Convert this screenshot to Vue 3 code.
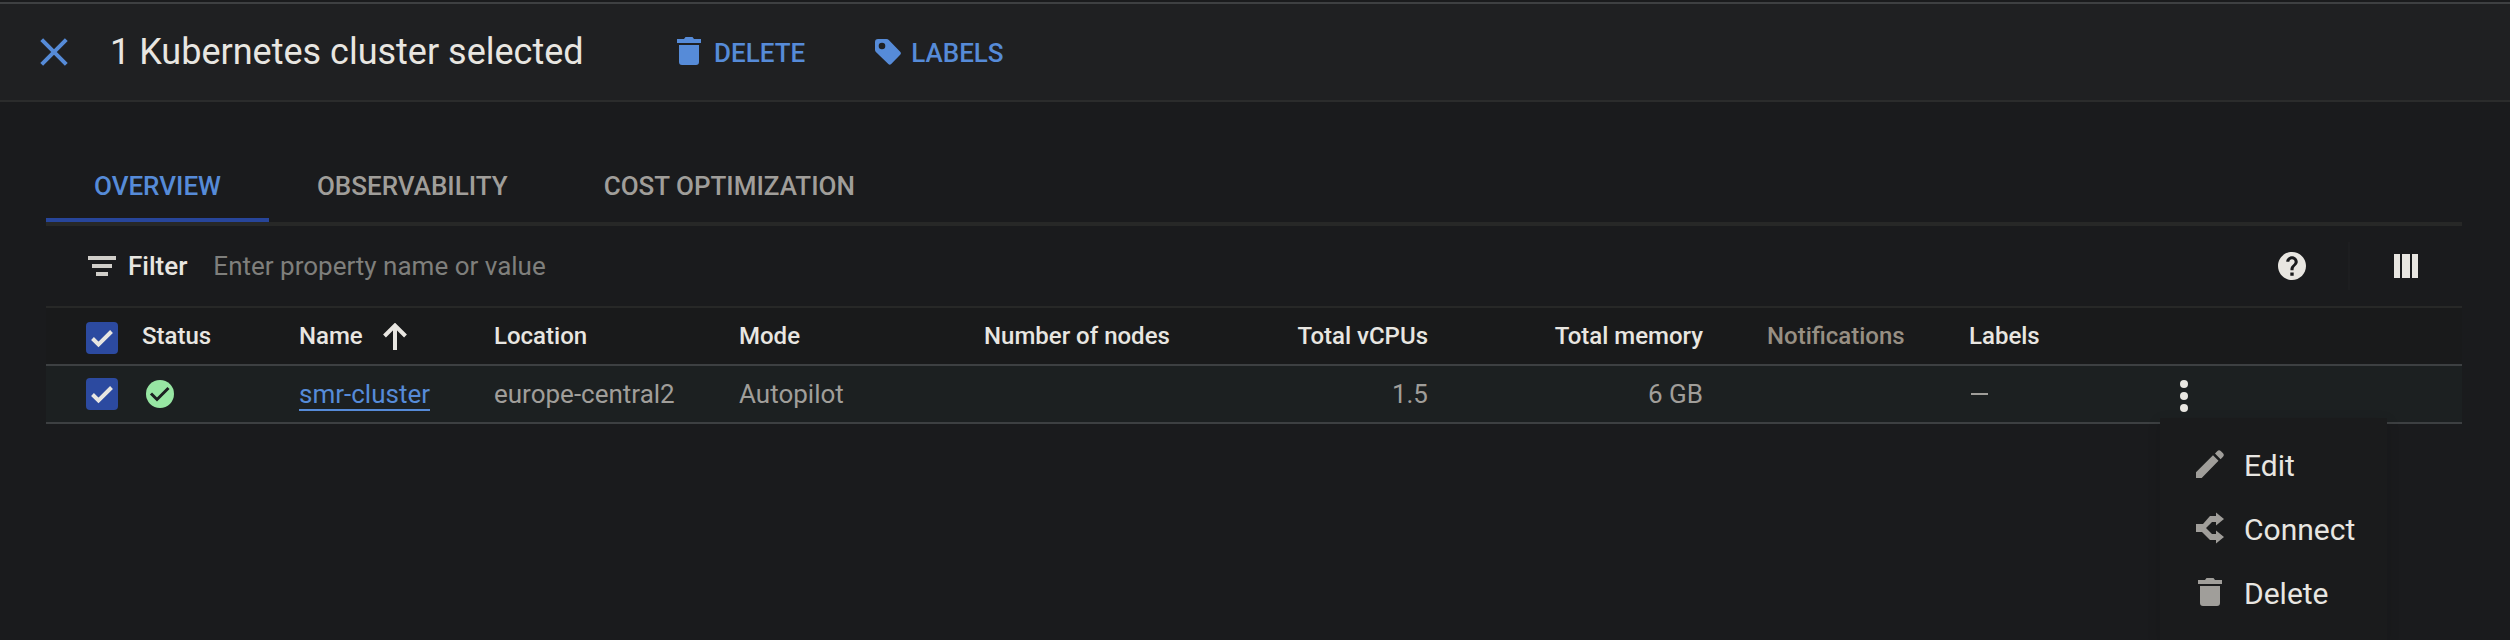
<script setup>
const tabs = ['OVERVIEW', 'OBSERVABILITY', 'COST OPTIMIZATION']
</script>

<template>
  <div class="page">
    <header class="bar">
      <svg class="close" viewBox="0 0 28 28"><path d="M1.7 1.7 26.3 26.3M26.3 1.7 1.7 26.3" /></svg>
      <h1 class="title">1 Kubernetes cluster selected</h1>
      <button class="action">
        <svg class="trash" viewBox="0 0 24 28"><path d="M0 2H7L8.5 0H15.5L17 2H24V6H0ZM2 8H22V25Q22 28 19 28H5Q2 28 2 25Z" /></svg>
        <span>DELETE</span>
      </button>
      <button class="action labels">
        <svg class="tag" viewBox="0 0 26 26"><path fill-rule="evenodd" d="M3 0H11.5Q12.9 0 13.8.9L25.2 12.8Q26.6 14.3 25.2 15.8L16.2 25.1Q14.8 26.5 13.3 25.1L.9 12.9Q0 12 0 10.8V3Q0 0 3 0ZM7 3.7A3.3 3.3 0 1 0 7 10.3A3.3 3.3 0 1 0 7 3.7Z" /></svg>
        <span>LABELS</span>
      </button>
    </header>

    <main class="content">
      <nav class="tabs">
        <a v-for="(tab, i) in tabs" :key="tab" class="tab" :class="{ active: i === 0 }">{{ tab }}</a>
      </nav>

      <div class="filter">
        <svg class="filter-icon" viewBox="0 0 28 20"><path d="M0 0H28V4H0ZM4 8H24V12H4ZM8 16H20V20H8Z" /></svg>
        <span class="filter-label">Filter</span>
        <span class="placeholder">Enter property name or value</span>
        <svg class="help" viewBox="2 2 20 20"><path d="M12 2C6.48 2 2 6.48 2 12s4.48 10 10 10 10-4.48 10-10S17.52 2 12 2zm1.2 17h-2.4v-2.4h2.4V19zm1.9-7.75-.9.92C13.5 12.9 13.1 13.5 13.1 15h-2.2v-.5c0-1.1.45-2.1 1.17-2.83l1.24-1.26c.37-.36.59-.86.59-1.41 0-1.1-.8-1.9-1.9-1.9s-1.9.8-1.9 1.9H7.9c0-2.21 1.89-4 4.1-4s4.1 1.79 4.1 4c0 .88-.4 1.68-1 2.25z" /></svg>
        <i class="divider"></i>
        <svg class="columns" viewBox="0 0 24 24"><path d="M0 0H6V24H0ZM8 0H16V24H8ZM18 0H24V24H18Z" /></svg>
      </div>

      <section class="table">
        <div class="row head">
          <span class="cell check"><svg viewBox="0 0 32 32"><path d="M6.5 16.5 12.5 22.5 25.5 9.5" /></svg></span>
          <span class="cell">Status</span>
          <span class="cell name">Name <svg class="arrow" viewBox="0 0 24 27"><path d="M12 27V3M1.5 13 12 2.5 22.5 13" /></svg></span>
          <span class="cell">Location</span>
          <span class="cell">Mode</span>
          <span class="cell">Number of nodes</span>
          <span class="cell right">Total vCPUs</span>
          <span class="cell right">Total memory</span>
          <span class="cell muted">Notifications</span>
          <span class="cell">Labels</span>
          <span class="cell"></span>
        </div>
        <div class="row body">
          <span class="cell check"><svg viewBox="0 0 32 32"><path d="M6.5 16.5 12.5 22.5 25.5 9.5" /></svg></span>
          <span class="cell"><svg class="ok" viewBox="0 0 28 28"><circle cx="14" cy="14" r="14" /><path d="M5 13.5 11 19.5 22.5 8" /></svg></span>
          <span class="cell"><a class="link">smr-cluster</a></span>
          <span class="cell">europe-central2</span>
          <span class="cell">Autopilot</span>
          <span class="cell"></span>
          <span class="cell right">1.5</span>
          <span class="cell right">6 GB</span>
          <span class="cell"></span>
          <span class="cell"><i class="dash"></i></span>
          <span class="cell more">
            <svg class="dots" viewBox="0 0 8 32"><circle cx="4" cy="4" r="4" /><circle cx="4" cy="16" r="4" /><circle cx="4" cy="28" r="4" /></svg>
            <div class="menu">
              <div class="item">
                <svg viewBox="0 0 28 32"><path d="M0 24.3 17 7.3 22.5 12.8 5.7 30H0ZM19 5.4 21.2 3.2Q23 1.2 25 3.2L26.8 5Q28.8 7 26.8 9L24.6 11.2Z" /></svg>
                <span>Edit</span>
              </div>
              <div class="item">
                <svg viewBox="0 0 28 32"><path d="M0 12H7L14 4H20V0.5L28 7 20 13.5V10H16L10 16 16 22H20V18.5L28 25 20 31.5V28H14L6 20H0Z" /></svg>
                <span>Connect</span>
              </div>
              <div class="item">
                <svg viewBox="-2 -2 28 32"><path d="M0 2H7L8.5 0H15.5L17 2H24V6H0ZM2 8H22V25Q22 28 19 28H5Q2 28 2 25Z" /></svg>
                <span>Delete</span>
              </div>
            </div>
          </span>
        </div>
      </section>
    </main>
  </div>
</template>

<style>
html, body { background: #1a1b1d; }
</style>

<style scoped>
.page {
  height: 640px;
  overflow: hidden;
  box-sizing: border-box;
  padding-top: 2px;
  background: #1a1b1d;
  color: #e8e6e1;
  font-family: Roboto, "Liberation Sans", sans-serif;
}
svg { display: block; flex: none; fill: currentColor; }
.bar {
  height: 100px;
  box-sizing: border-box;
  display: flex;
  align-items: center;
  padding-left: 40px;
  border-top: 2px solid #3e4042;
  border-bottom: 2px solid #2b2c2c;
  background: #1f2022;
}
.close { width: 28px; height: 28px; stroke: #568bd8; stroke-width: 4; fill: none; }
.title {
  margin: 0 0 0 42px;
  width: 567px;
  font-size: 36px;
  line-height: 40px;
  font-weight: 400;
  white-space: nowrap;
}
.action {
  display: flex;
  align-items: center;
  padding: 0;
  border: 0;
  background: none;
  color: #568bd8;
  font: 500 26px/32px Roboto, sans-serif;
}
.action span { padding-top: 2px; }
.labels { margin-left: 70px; }
.trash { width: 24px; height: 28px; margin: 0 13px 2px 0; }
.tag { width: 26px; height: 26px; margin-right: 10px; }
.content { margin: 0 48px 0 46px; }
.tabs {
  display: flex;
  height: 124px;
  box-sizing: border-box;
  border-bottom: 4px solid #272827;
}
.tab {
  padding: 68px 48px 0;
  font-size: 26px;
  line-height: 32px;
  font-weight: 500;
  color: #a09e9a;
}
.active { color: #568bd8; box-shadow: inset 0 -4px #27459a; }
.filter {
  display: flex;
  align-items: center;
  height: 80px;
  padding: 0 44px 0 42px;
  border-bottom: 2px solid #272827;
  font-size: 26px;
}
.filter-icon { width: 28px; height: 20px; color: #d0cec9; }
.filter-label { margin-left: 12px; font-weight: 500; }
.placeholder { margin-left: 26px; color: #7f7f7c; flex: 1; }
.help { width: 28px; height: 28px; }
.divider { width: 2px; height: 48px; margin: 0 44px 0 42px; background: #1d1e20; }
.columns { width: 24px; height: 24px; }
.row {
  display: grid;
  grid-template-columns: 96px 157px 195px 245px 245px 244px 200px 275px 266px 211px 1fr;
  height: 56px;
  border-bottom: 2px solid #3d4042;
}
.cell { display: flex; align-items: center; white-space: nowrap; min-width: 0; }
.head { font-size: 24px; font-weight: 500; background: #191a1b; }
.body { font-size: 26px; color: #a09e9a; background: #1c2021; }
.check svg {
  width: 32px;
  height: 32px;
  margin-left: 40px;
  border-radius: 4px;
  background: #2c4aa0;
  fill: none;
  stroke: #e8e6e1;
  stroke-width: 4;
}
.head .check { padding-top: 4px; }
.arrow { width: 24px; height: 27px; margin-left: 20px; fill: none; stroke: #e8e6e1; stroke-width: 4; }
.muted { color: #978f83; padding-left: 64px; }
.right { justify-content: flex-end; }
.ok { width: 28px; height: 28px; margin-left: 4px; color: #97e6a3; }
.ok path { fill: none; stroke: #1c2021; stroke-width: 3; }
.link { color: #568bd8; border-bottom: 2px solid #568bd8; padding-top: 2px; line-height: 30px; }
.dash { width: 17px; height: 2px; margin-left: 2px; background: #a09e9a; }
.more { position: relative; }
.dots { width: 8px; height: 32px; margin-top: 4px; color: #e8e6e1; }
.menu {
  position: absolute;
  left: -20px;
  top: 52px;
  width: 227px;
  height: 222px;
  box-sizing: border-box;
  padding-top: 14px;
  background: #1a1b1c;
  box-shadow: 0 4px 12px rgba(0, 0, 0, 0.15);
}
.item {
  display: flex;
  align-items: center;
  height: 64px;
  padding-left: 36px;
  gap: 20px;
  font-size: 30px;
  color: #e8e6e1;
}
.item span { padding-top: 2px; }
.item svg { width: 28px; height: 32px; color: #a09e9a; }
</style>
